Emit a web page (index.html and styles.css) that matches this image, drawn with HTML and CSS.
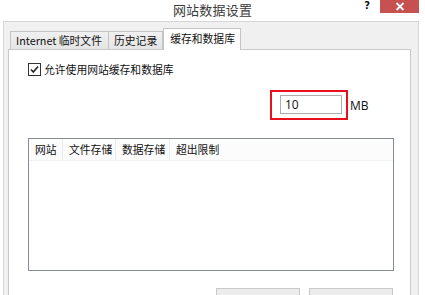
FILE: index.html
```html
<!DOCTYPE html>
<html lang="zh-CN">
<head>
<meta charset="utf-8">
<title>网站数据设置</title>
<link rel="stylesheet" href="styles.css">
</head>
<body>
<div class="window">
  <div class="titlebar">
    <div class="tb-left"></div>
    <div class="title">网站数据设置</div>
    <div class="tb-right">
      <span class="help">?</span>
      <span class="close">
        <svg width="10" height="9" viewBox="0 0 10 9"><path d="M1.5 1 L8.5 8 M8.5 1 L1.5 8" stroke="#fff" stroke-width="1.8" fill="none"/></svg>
      </span>
    </div>
  </div>
  <div class="frame">
    <div class="tabs">
      <div class="tab">Internet 临时文件</div>
      <div class="tab">历史记录</div>
      <div class="tab active">缓存和数据库</div>
    </div>
    <div class="panel">
      <label class="check-row">
        <span class="checkbox">
          <svg width="11" height="11" viewBox="0 0 11 11"><path d="M2 5.5 L4.3 8 L9 2.5" stroke="#222" stroke-width="1.6" fill="none"/></svg>
        </span>
        <span>允许使用网站缓存和数据库</span>
      </label>
      <div class="size-row">
        <div class="highlight">
          <div class="input">10</div>
        </div>
        <span class="unit">MB</span>
      </div>
      <div class="list">
        <div class="list-head">
          <div class="col c1">网站</div>
          <div class="col c2">文件存储</div>
          <div class="col c3">数据存储</div>
          <div class="col c4">超出限制</div>
        </div>
      </div>
      <div class="buttons">
        <div class="btn"></div>
        <div class="btn"></div>
      </div>
    </div>
  </div>
</div>
</body>
</html>
```
FILE: styles.css
```css
html, body {
  margin: 0;
  padding: 0;
  background: #ffffff;
  overflow: hidden;
}
body {
  width: 425px;
  height: 295px;
  font-family: "Noto Sans CJK SC", "Noto Sans", sans-serif;
  font-size: 10.8px;
  color: #111;
}
.window {
  display: flex;
  flex-direction: column;
  height: 295px;
  overflow: hidden;
}
.titlebar {
  height: 21px;
  flex: none;
  display: grid;
  grid-template-columns: 1fr auto 1fr;
  background: #ffffff;
}
.title {
  font-size: 13px;
  line-height: 20px;
  color: #3a3a3a;
  letter-spacing: 0.2px;
}
.tb-right {
  display: flex;
  justify-content: flex-end;
  align-items: flex-start;
  padding-right: 6px;
}
.help {
  font-family: "DejaVu Sans", sans-serif;
  font-weight: bold;
  font-size: 10px;
  line-height: 12px;
  margin-right: 10px;
  color: #111;
}
.close {
  width: 39px;
  height: 13px;
  background: #c75050;
  display: flex;
  align-items: center;
  justify-content: center;
}
.close svg { display: block; margin-top: -1px; }
.frame {
  flex: 1;
  min-height: 0;
  margin: 0 6px 0 3px;
  border: 1px solid #d6d6d6;
  border-bottom: none;
  background: #f0f0f0;
  padding: 6px 7px 0 4px;
  display: flex;
  flex-direction: column;
}
.tabs {
  display: flex;
  align-items: flex-end;
  height: 22px;
  flex: none;
  padding-left: 2px;
  position: relative;
  z-index: 1;
  margin-bottom: -1px;
}
.tab {
  height: 17px;
  line-height: 17px;
  padding: 0 5px;
  border: 1px solid #c4c4c4;
  border-bottom: none;
  background: linear-gradient(#f0f0f0, #e5e5e5);
  color: #111;
  margin-bottom: 1px;
  white-space: nowrap;
}
.tab + .tab { border-left: none; }
.tab:first-child { width: 87px; }
.tab.active {
  height: 21px;
  line-height: 18px;
  background: #ffffff;
  border-left: 1px solid #c4c4c4;
  padding: 0 5px 0 6px;
  margin-bottom: 0;
}
.panel {
  flex: 1;
  background: #ffffff;
  border: 1px solid #c9c9c9;
  border-bottom: none;
  padding: 13px 16px 0 19px;
  display: flex;
  flex-direction: column;
}
.check-row {
  display: flex;
  align-items: center;
  gap: 3px;
  height: 13px;
  line-height: 13px;
}
.checkbox {
  width: 11px;
  height: 11px;
  border: 1px solid #333;
  display: flex;
  align-items: center;
  justify-content: center;
  background: #fff;
}
.checkbox svg { display: block; }
.size-row {
  display: flex;
  align-items: center;
  padding-left: 242px;
  margin-top: 14px;
}
.highlight {
  width: 66px;
  height: 23px;
  border: 2px solid #e8101e;
  padding: 3px 0 0 8px;
}
.input {
  width: 56px;
  height: 17px;
  border: 1px solid #abadb3;
  font-family: "Open Sans", "Noto Sans", sans-serif;
  font-size: 12px;
  line-height: 17px;
  padding-left: 4px;
}
.unit {
  font-family: "Open Sans", "Noto Sans", sans-serif;
  font-size: 12px;
  margin-left: 2px;
  color: #111;
}
.list {
  margin-top: 18px;
  height: 131px;
  flex: none;
  border: 1px solid #868b94;
  background: #fff;
}
.list-head {
  display: flex;
  height: 21px;
  border-bottom: 1px solid #eef1f6;
  background: #fcfcfd;
}
.col {
  line-height: 21px;
  padding-left: 6px;
  border-right: 1px solid #e6ebf2;
  box-sizing: border-box;
}
.c1 { width: 34px; }
.c2 { width: 53px; }
.c3 { width: 54px; }
.c4 { width: 54px; border-right: none; }
.buttons {
  display: flex;
  justify-content: flex-end;
  gap: 9px;
  margin-top: 17px;
  padding-right: 1px;
}
.btn {
  width: 82px;
  height: 22px;
  flex: none;
  border: 1px solid #c8c8c8;
  background: #ececec;
}
```
